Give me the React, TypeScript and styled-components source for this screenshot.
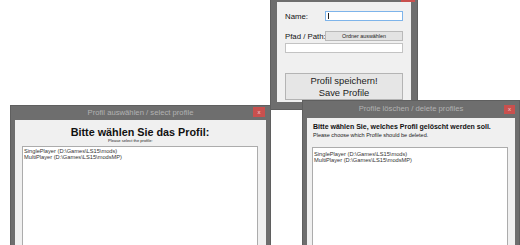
import styled, { createGlobalStyle } from 'styled-components';

const GlobalStyle = createGlobalStyle`
  html, body {
    margin: 0;
    padding: 0;
    background: #ffffff;
  }
  body {
    font-family: 'Liberation Sans', Arial, sans-serif;
    color: #1a1a1a;
  }
`;

const PROFILES = ['SinglePlayer (D:\\Games\\LS15\\mods)', 'MultiPlayer (D:\\Games\\LS15\\modsMP)'];

const Desktop = styled.div`
  position: relative;
  width: 520px;
  height: 245px;
  overflow: hidden;
  background: #ffffff;
`;

// windows lie on a free desktop, so they are placed by coordinates
const Frame = styled.div<{ $x: number; $y: number; $w: number; $h: number }>`
  position: absolute;
  left: ${(p) => p.$x}px;
  top: ${(p) => p.$y}px;
  width: ${(p) => p.$w}px;
  height: ${(p) => p.$h}px;
  display: flex;
  flex-direction: column;
  background: #6e6e6e;
  box-shadow: inset 0 0 0 1px #5f5f5f;
`;

const TitleBar = styled.div<{ $h: number }>`
  flex: none;
  height: ${(p) => p.$h}px;
  display: grid;
  grid-template-columns: 1fr auto 1fr;
  align-items: start;
`;

const Title = styled.div<{ $h: number }>`
  grid-column: 2;
  line-height: ${(p) => p.$h}px;
  font-size: 7.7px;
  color: #b2b2b2;
  white-space: nowrap;
`;

const CloseButton = styled.div<{ $top: number; $right: number; $size: number }>`
  grid-column: 3;
  justify-self: end;
  margin-top: ${(p) => p.$top}px;
  margin-right: ${(p) => p.$right}px;
  width: ${(p) => p.$size + 2}px;
  height: ${(p) => p.$size}px;
  background: #c9504e;
  color: #f4d6d6;
  font-size: 6px;
  line-height: ${(p) => p.$size}px;
  text-align: center;
`;

const Client = styled.div<{ $side: number; $bottom: number; $pad: string }>`
  flex: 1;
  min-height: 0;
  margin: 0 ${(p) => p.$side}px ${(p) => p.$bottom}px;
  padding: ${(p) => p.$pad};
  background: #f0f0f0;
  display: flex;
  flex-direction: column;
`;

/* ---------- create profile window ---------- */

const FieldRow = styled.div<{ $gap?: number }>`
  display: grid;
  grid-template-columns: 40px 1fr;
  align-items: center;
  height: 10px;
  margin-top: ${(p) => p.$gap || 0}px;
`;

const Label = styled.span`
  font-size: 7.8px;
  color: #111;
  white-space: nowrap;
`;

const TextBox = styled.div<{ $focused?: boolean; $gap?: number }>`
  box-sizing: border-box;
  height: 10px;
  margin-top: ${(p) => p.$gap || 0}px;
  background: #ffffff;
  border: 1px solid ${(p) => (p.$focused ? '#7eb4ea' : '#c3c3c3')};
  display: flex;
  align-items: center;
`;

const Caret = styled.span`
  width: 1px;
  height: 6px;
  margin-left: 2px;
  background: #222;
`;

const SmallButton = styled.div`
  box-sizing: border-box;
  height: 10px;
  background: #e3e3e3;
  border: 1px solid #b9b9b9;
  font-size: 5.4px;
  line-height: 8px;
  text-align: center;
  color: #222;
`;

const BigButton = styled.div`
  box-sizing: border-box;
  height: 27px;
  margin-top: 20px;
  background: #e6e6e6;
  border: 1px solid #b4b4b4;
  display: flex;
  flex-direction: column;
  justify-content: center;
  align-items: center;
  font-size: 9.4px;
  line-height: 11.5px;
  color: #222;
`;

/* ---------- list windows ---------- */

const Heading = styled.div<{ $size: number; $center?: boolean; $indent?: number }>`
  font-weight: bold;
  font-size: ${(p) => p.$size}px;
  line-height: ${(p) => p.$size + 1.5}px;
  text-align: ${(p) => (p.$center ? 'center' : 'left')};
  padding-left: ${(p) => p.$indent || 0}px;
  color: #111;
  white-space: nowrap;
`;

const Hint = styled.div<{ $size: number; $indent: number }>`
  font-size: ${(p) => p.$size}px;
  line-height: ${(p) => p.$size + 1.5}px;
  padding-left: ${(p) => p.$indent}px;
  color: #222;
  white-space: nowrap;
`;

const ListBox = styled.div<{ $gap: number; $padTop: number }>`
  flex: 1;
  margin-top: ${(p) => p.$gap}px;
  padding: ${(p) => p.$padTop}px 1px 0;
  background: #ffffff;
  border: 1px solid #acacac;
`;

const ListItem = styled.div`
  font-size: 5.7px;
  line-height: 6.2px;
  color: #333;
  white-space: nowrap;
`;

export default function App() {
  return (
    <Desktop>
      <GlobalStyle />

      <Frame $x={270} $y={-16} $w={148} $h={126}>
        <TitleBar $h={18}>
          <Title $h={18}></Title>
          <CloseButton $top={6} $right={3} $size={12} />
        </TitleBar>
        <Client $side={7} $bottom={8} $pad="9px 8px 0 8px">
          <FieldRow>
            <Label>Name:</Label>
            <TextBox $focused>
              <Caret />
            </TextBox>
          </FieldRow>
          <FieldRow $gap={10}>
            <Label>Pfad / Path:</Label>
            <SmallButton>Ordner auswählen</SmallButton>
          </FieldRow>
          <TextBox $gap={2} />
          <BigButton>
            <span>Profil speichern!</span>
            <span>Save Profile</span>
          </BigButton>
        </Client>
      </Frame>

      <Frame $x={10} $y={105} $w={261} $h={160}>
        <TitleBar $h={15}>
          <Title $h={15}>Profil auswählen / select profile</Title>
          <CloseButton $top={2} $right={6} $size={10}>x</CloseButton>
        </TitleBar>
        <Client $side={5} $bottom={5} $pad="6px 8px 0 7px">
          <Heading $size={10.8} $center>
            Bitte wählen Sie das Profil:
          </Heading>
          <Hint $size={4.1} $indent={86}>
            Please select the profile:
          </Hint>
          <ListBox $gap={2} $padTop={1}>
            {PROFILES.map((p) => (
              <ListItem key={p}>{p}</ListItem>
            ))}
          </ListBox>
        </Client>
      </Frame>

      <Frame $x={302} $y={100} $w={218} $h={160}>
        <TitleBar $h={18}>
          <Title $h={18}>Profile löschen / delete profiles</Title>
          <CloseButton $top={5} $right={5} $size={9}>x</CloseButton>
        </TitleBar>
        <Client $side={5} $bottom={5} $pad="5px 7px 0 5px">
          <Heading $size={7} $indent={1}>
            Bitte wählen Sie, welches Profil gelöscht werden soll.
          </Heading>
          <Hint $size={5.5} $indent={1}>
            Please choose which Profile should be deleted.
          </Hint>
          <ListBox $gap={8} $padTop={3}>
            {PROFILES.map((p) => (
              <ListItem key={p}>{p}</ListItem>
            ))}
          </ListBox>
        </Client>
      </Frame>
    </Desktop>
  );
}
